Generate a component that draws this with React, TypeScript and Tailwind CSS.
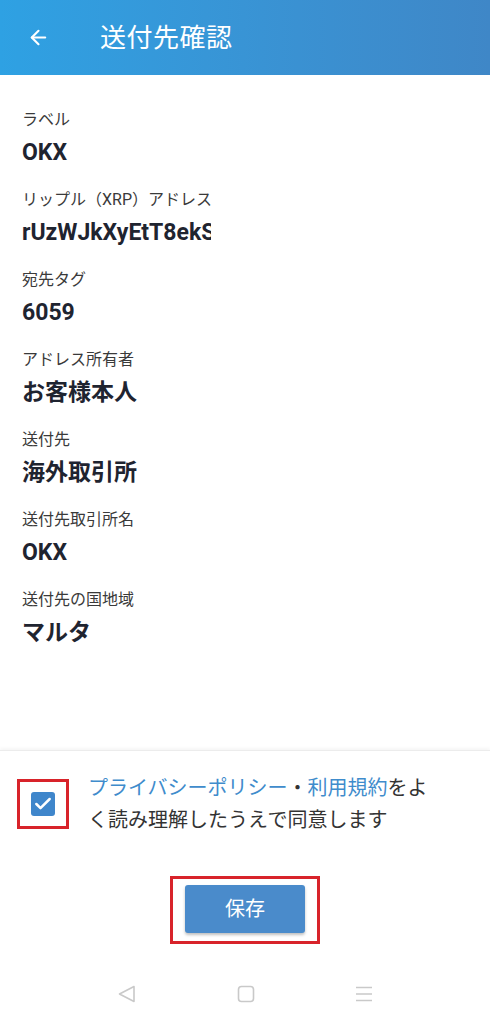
import { ArrowLeft, Check } from "lucide-react"

const fields = [
  { label: "ラベル", value: "OKX" },
  { label: "リップル（XRP）アドレス", value: "rUzWJkXyEtT8ekS", clip: true },
  { label: "宛先タグ", value: "6059" },
  { label: "アドレス所有者", value: "お客様本人" },
  { label: "送付先", value: "海外取引所" },
  { label: "送付先取引所名", value: "OKX" },
  { label: "送付先の国地域", value: "マルタ" },
]

const font = { fontFamily: 'Roboto, "Noto Sans CJK JP", sans-serif' }

function NavBar() {
  return (
    <div className="flex h-[60px] items-center justify-between px-[117px]">
      <svg width="20" height="20" viewBox="0 0 20 20" fill="none" stroke="#c9c9c9" strokeWidth="1.6" strokeLinejoin="round">
        <path d="M17 2.5 L2.5 10 L17 17.5 Z" />
      </svg>
      <svg width="18" height="18" viewBox="0 0 18 18" fill="none" stroke="#c9c9c9" strokeWidth="1.6">
        <rect x="1.5" y="1.5" width="15" height="15" rx="3" />
      </svg>
      <svg width="18" height="18" viewBox="0 0 18 18" fill="none" stroke="#c9c9c9" strokeWidth="1.4">
        <path d="M1 2.5 H17 M1 9 H17 M1 15.5 H17" />
      </svg>
    </div>
  )
}

export default function App() {
  return (
    <div className="flex h-[1024px] w-[490px] flex-col bg-white" style={font}>
      <header className="flex h-[75px] shrink-0 items-center bg-gradient-to-r from-[#2ea1e3] to-[#3f87c7] pl-[27px] text-white">
        <ArrowLeft size={23} strokeWidth={2.2} />
        <h1 className="ml-[50px] text-[26px] leading-none font-normal tracking-[0.5px]">送付先確認</h1>
      </header>

      <main className="flex flex-1 flex-col px-[22px] pt-[33px]">
        {fields.map((f) => (
          <div key={f.label} className="flex h-[80px] flex-col">
            <div className="h-[24px] text-[16px] leading-[24px] text-[#3a3a3a]">{f.label}</div>
            <div
              className={
                "mt-[6px] h-[30px] text-[23px] leading-[30px] font-bold text-[#1f2430] " +
                (f.clip ? "w-[189px] overflow-hidden whitespace-nowrap" : "")
              }
            >
              {f.value}
            </div>
          </div>
        ))}
      </main>

      <section className="shrink-0 border-t border-[#ececec] shadow-[0_-2px_3px_rgba(0,0,0,0.04)]">
        <div className="flex items-start pt-[21px] pl-[17px]">
          <div className="mt-[7px] flex h-[50px] w-[52px] shrink-0 items-center justify-center border-[3px] border-[#d8232a]">
            <div className="flex h-[24px] w-[24px] items-center justify-center rounded-[3px] bg-[#3f86cb]">
              <Check size={20} strokeWidth={3} className="text-white" />
            </div>
          </div>
          <p className="ml-[19px] w-[352px] text-[20px] leading-[32px] text-[#333]">
            <span className="text-[#3f8ccc]">プライバシーポリシー</span>・<span className="text-[#3f8ccc]">利用規約</span>をよく読み理解したうえで同意します
          </p>
        </div>

        <div className="mt-[40px] flex justify-center">
          <div className="border-[3px] border-[#d8232a] px-[12px] pt-[6px] pb-[8px]">
            <button className="flex h-[48px] w-[120px] items-center justify-center rounded-[3px] bg-[#4a8bcb] text-[20px] text-white shadow-[0_2px_3px_rgba(0,0,0,0.25)]">
              保存
            </button>
          </div>
        </div>

        <div className="mt-[20px]">
          <NavBar />
        </div>
      </section>
    </div>
  )
}
